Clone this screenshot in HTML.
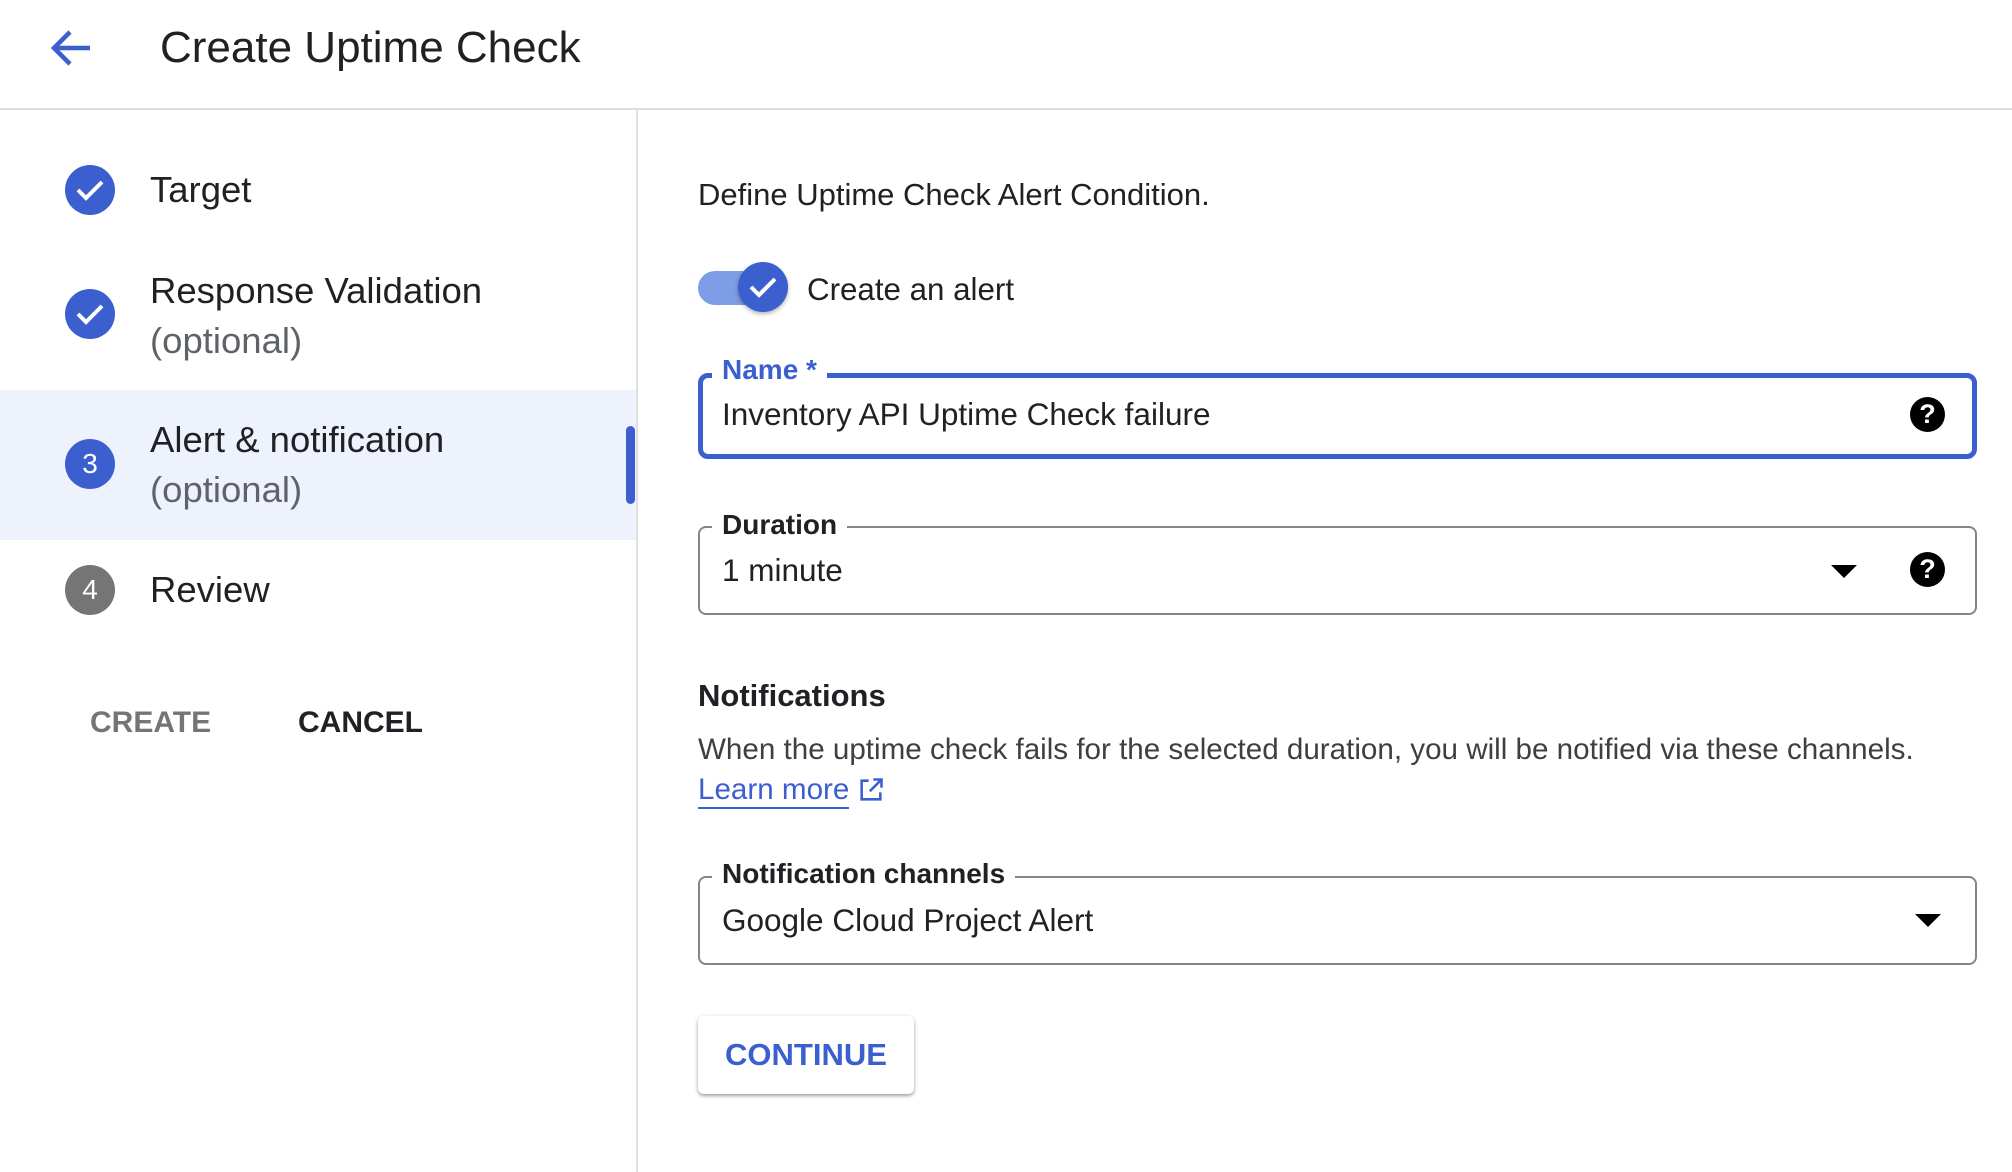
<!DOCTYPE html>
<html><head><meta charset="utf-8"><style>
*{margin:0;padding:0;box-sizing:border-box}
body{width:2012px;height:1172px;background:#fff;font-family:"Liberation Sans",sans-serif;color:#202124;position:relative;overflow:hidden}
.a{position:absolute;white-space:nowrap}
.circ{position:absolute;width:50px;height:50px;border-radius:50%;background:#3b5fcf;color:#fff;font-size:28px;display:flex;align-items:center;justify-content:center}
.st{font-size:36.5px;line-height:50px}
.opt{color:#5f6368}
.box{position:absolute;left:698px;width:1279px;border:2px solid #80868b;border-radius:8px}
.lbl{position:absolute;background:#fff;padding:0 10px;font-size:28px;font-weight:bold;line-height:32px}
.val{font-size:31.5px}
.help{position:absolute;width:35px;height:35px;border-radius:50%;background:#000;color:#fff;font-weight:bold;font-size:27px;display:flex;align-items:center;justify-content:center}
.tri{position:absolute;width:0;height:0;border-left:13px solid transparent;border-right:13px solid transparent;border-top:13px solid #000}
</style></head><body>
<svg class="a" style="left:48px;top:28px" width="46" height="40" viewBox="0 0 46 40"><path d="M42 20H8M22 4L6 20l16 16" fill="none" stroke="#3b5fcf" stroke-width="4.5"/></svg>
<div class="a" style="left:160px;top:20px;font-size:44px;line-height:56px">Create Uptime Check</div>
<div class="a" style="left:0;top:108px;width:2012px;height:2px;background:#dadce0"></div>
<div class="a" style="left:636px;top:110px;width:2px;height:1062px;background:#e0e0e0"></div>
<div class="a" style="left:0;top:390px;width:636px;height:150px;background:#eef2fc"></div>
<div class="a" style="left:626px;top:426px;width:9px;height:78px;border-radius:5px;background:#3b5fcf"></div>

<div class="circ" style="left:65px;top:165px"><svg width="30" height="24" viewBox="0 0 30 24"><path d="M3 12l8 8L27 4" fill="none" stroke="#fff" stroke-width="4"/></svg></div>
<div class="a st" style="left:150px;top:165px">Target</div>
<div class="circ" style="left:65px;top:289px"><svg width="30" height="24" viewBox="0 0 30 24"><path d="M3 12l8 8L27 4" fill="none" stroke="#fff" stroke-width="4"/></svg></div>
<div class="a st" style="left:150px;top:266px">Response Validation<br><span class="opt">(optional)</span></div>
<div class="circ" style="left:65px;top:439px">3</div>
<div class="a st" style="left:150px;top:415px">Alert &amp; notification<br><span class="opt">(optional)</span></div>
<div class="circ" style="left:65px;top:565px;background:#757575">4</div>
<div class="a st" style="left:150px;top:565px">Review</div>
<div class="a" style="left:90px;top:706px;font-size:30px;font-weight:bold;color:#757575">CREATE</div>
<div class="a" style="left:298px;top:706px;font-size:30px;font-weight:bold;color:#202124">CANCEL</div>

<div class="a" style="left:698px;top:177px;font-size:31px">Define Uptime Check Alert Condition.</div>
<div class="a" style="left:698px;top:271px;width:66px;height:34px;border-radius:17px;background:#7d9de6"></div>
<div class="circ" style="left:738px;top:262px;box-shadow:0 2px 4px rgba(0,0,0,.3)"><svg width="30" height="24" viewBox="0 0 30 24"><path d="M3 12l8 8L27 4" fill="none" stroke="#fff" stroke-width="4"/></svg></div>
<div class="a" style="left:807px;top:272px;font-size:31.3px">Create an alert</div>

<div class="box" style="top:373px;height:86px;border:5px solid #3b5fcf;border-radius:10px"></div>
<div class="lbl" style="left:712px;top:354px;color:#3b5fcf">Name *</div>
<div class="a val" style="left:722px;top:396px">Inventory API Uptime Check failure</div>
<div class="help" style="left:1910px;top:397px">?</div>

<div class="box" style="top:526px;height:89px"></div>
<div class="lbl" style="left:712px;top:509px">Duration</div>
<div class="a val" style="left:722px;top:552px">1 minute</div>
<div class="tri" style="left:1831px;top:565px"></div>
<div class="help" style="left:1910px;top:552px">?</div>

<div class="a" style="left:698px;top:678px;font-size:31px;font-weight:bold">Notifications</div>
<div class="a" style="left:698px;top:733px;font-size:29.6px;color:#3c4043">When the uptime check fails for the selected duration, you will be notified via these channels.</div>
<div class="a" style="left:698px;top:773px;font-size:29.6px;color:#3b5fcf;border-bottom:2px solid #3b5fcf;line-height:34px">Learn more</div>
<svg class="a" style="left:857px;top:776px" width="28" height="28" viewBox="0 0 24 24"><path d="M10 4H4v16h16v-6M14 3h7v7M21 3L11 13" fill="none" stroke="#3b5fcf" stroke-width="2.2"/></svg>

<div class="box" style="top:876px;height:89px"></div>
<div class="lbl" style="left:712px;top:858px">Notification channels</div>
<div class="a val" style="left:722px;top:902px">Google Cloud Project Alert</div>
<div class="tri" style="left:1915px;top:914px"></div>

<div class="a" style="left:698px;top:1016px;width:216px;height:78px;border-radius:6px;background:#fff;box-shadow:0 2px 3px rgba(0,0,0,.3),0 1px 6px rgba(0,0,0,.12);font-size:31px;font-weight:bold;color:#3b5fcf;display:flex;align-items:center;justify-content:center">CONTINUE</div>
</body></html>
